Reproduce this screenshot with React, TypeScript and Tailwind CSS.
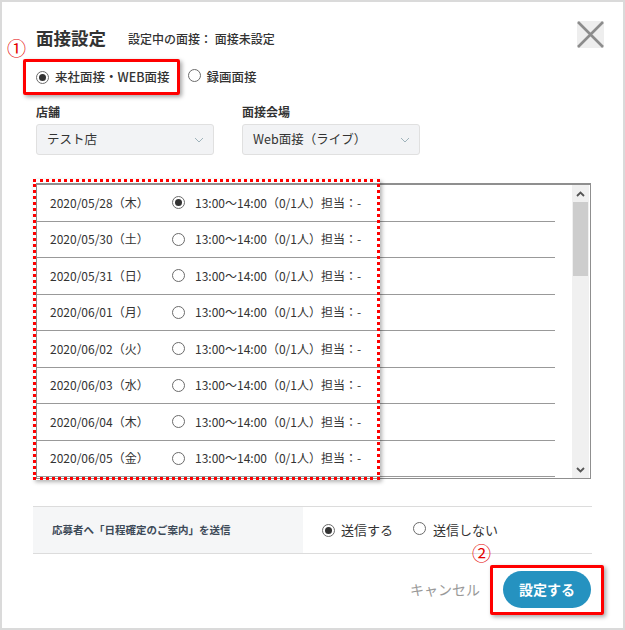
import React from "react";

const Radio = ({ checked }: { checked?: boolean }) => (
  <span className="inline-flex h-[13px] w-[13px] shrink-0 items-center justify-center rounded-full border border-[#6b6b6b] bg-white">
    {checked && <span className="h-[7px] w-[7px] rounded-full bg-[#333]" />}
  </span>
);

const Chevron = () => (
  <svg width="10" height="6" viewBox="0 0 10 6" fill="none">
    <path d="M1 1l4 4L9 1" stroke="#9fb3bb" strokeWidth="1" />
  </svg>
);

const rows = [
  ["2020/05/28（木）", true],
  ["2020/05/30（土）", false],
  ["2020/05/31（日）", false],
  ["2020/06/01（月）", false],
  ["2020/06/02（火）", false],
  ["2020/06/03（水）", false],
  ["2020/06/04（木）", false],
  ["2020/06/05（金）", false],
] as const;

export default function App() {
  return (
    <div className="relative h-[630px] w-[625px] overflow-hidden border-2 border-[#dadada] bg-white pl-[34px] font-['Noto_Sans_CJK_JP','Noto_Sans',sans-serif] text-[#333]">
      {/* header */}
      <div className="mt-[24px] flex h-[24px] items-center">
        <span className="text-[17.5px] font-bold leading-none text-[#333]">面接設定</span>
        <span className="ml-[22px] mt-[2px] text-[12px] font-medium leading-none text-[#333]">設定中の面接： 面接未設定</span>
      </div>

      {/* close */}
      <div className="absolute right-[19px] top-[19px] h-[27px] w-[27px] bg-[#eeeeee]">
        <svg width="27" height="27" viewBox="0 0 27 27">
          <path d="M1 1L26 26M26 1L1 26" stroke="#8c8c8c" strokeWidth="2.6" />
        </svg>
      </div>

      {/* interview type */}
      <div className="mt-[17px] flex h-[20px] items-center text-[12.5px] font-medium">
        <Radio checked />
        <span className="ml-[6px]">来社面接・WEB面接</span>
        <span className="ml-[18px]"><Radio /></span>
        <span className="ml-[6px]">録画面接</span>
      </div>

      {/* selects */}
      <div className="mt-[17px] flex gap-[28px]">
        <div className="flex w-[178px] flex-col">
          <span className="h-[16px] text-[12px] font-bold leading-[16px]">店舗</span>
          <div className="mt-[4px] flex h-[31px] items-center justify-between rounded-[3px] border border-[#e0e0e0] bg-[#f2f3f5] pl-[10px] pr-[9px] text-[12.5px]">
            <span>テスト店</span>
            <Chevron />
          </div>
        </div>
        <div className="flex w-[178px] flex-col">
          <span className="h-[16px] text-[12px] font-bold leading-[16px]">面接会場</span>
          <div className="mt-[4px] flex h-[31px] items-center justify-between rounded-[3px] border border-[#e0e0e0] bg-[#f2f3f5] pl-[10px] pr-[9px] text-[12.5px]">
            <span>Web面接（ライブ）</span>
            <Chevron />
          </div>
        </div>
      </div>

      {/* date list */}
      <div className="mt-[28px] flex h-[296px] w-[555px] border-b border-l border-r border-t-2 border-[#8f8f8f]">
        <div className="h-full w-[518px] overflow-hidden">
          {rows.map(([d, c], i) => (
            <div key={i} className="flex h-[36.5px] shrink-0 items-center border-b border-[#999] text-[12px]">
              <span className="ml-[13px] w-[122px]">{d}</span>
              <Radio checked={c} />
              <span className="ml-[10px]">13:00〜14:00（0/1人）担当：-</span>
            </div>
          ))}
        </div>
        <div className="w-[17px]" />
        <div className="flex h-full w-[17px] flex-col items-center bg-[#f0f0f0]">
          <div className="flex h-[17px] items-center justify-center">
            <svg width="9" height="6" viewBox="0 0 9 6"><path d="M1 5l3.5-3.5L8 5" stroke="#555" strokeWidth="1.8" fill="none" /></svg>
          </div>
          <div className="h-[74px] w-[15px] bg-[#cdcdcd]" />
          <div className="flex-1" />
          <div className="flex h-[17px] items-center justify-center">
            <svg width="9" height="6" viewBox="0 0 9 6"><path d="M1 1l3.5 3.5L8 1" stroke="#555" strokeWidth="1.8" fill="none" /></svg>
          </div>
        </div>
      </div>

      {/* send notice */}
      <div className="-ml-[3px] mt-[27px] flex h-[48px] w-[559px] border-b border-t border-[#dcdcdc]">
        <div className="flex w-[270px] items-center bg-[#f5f6f7] pl-[19px] text-[10.5px] font-bold text-[#3d4a58]">
          応募者へ「日程確定のご案内」を送信
        </div>
        <div className="flex items-center pl-[19px] text-[13px]">
          <Radio checked />
          <span className="ml-[6px]">送信する</span>
          <span className="ml-[20px]"><Radio /></span>
          <span className="ml-[7px]">送信しない</span>
        </div>
      </div>

      {/* buttons */}
      <div className="mt-[17px] flex w-[555px] items-center justify-end">
        <span className="mr-[23px] text-[14px] text-[#999]">キャンセル</span>
        <div className="flex h-[37px] w-[88px] items-center justify-center rounded-full bg-[#2592c0] text-[14px] font-bold text-white">
          設定する
        </div>
      </div>

      {/* annotations */}
      <span className="absolute left-[5px] top-[36px] text-[19px] leading-none text-[#e50000]">①</span>
      <div className="absolute left-[21px] top-[57px] h-[36px] w-[157px] rounded-[2px] border-[3px] border-[#ff0000] shadow-[2px_2px_4px_rgba(0,0,0,0.35)]" />
      <div className="absolute left-[31px] top-[177px] h-[301px] w-[347px] border-[3px] border-dotted border-[#ff0000] shadow-[2px_2px_4px_rgba(0,0,0,0.3)]" />
      <span className="absolute left-[470px] top-[541px] text-[19px] leading-none text-[#e50000]">②</span>
      <div className="absolute left-[488px] top-[563px] h-[50px] w-[114px] rounded-[2px] border-[3px] border-[#ff0000] shadow-[2px_2px_4px_rgba(0,0,0,0.35)]" />
    </div>
  );
}
